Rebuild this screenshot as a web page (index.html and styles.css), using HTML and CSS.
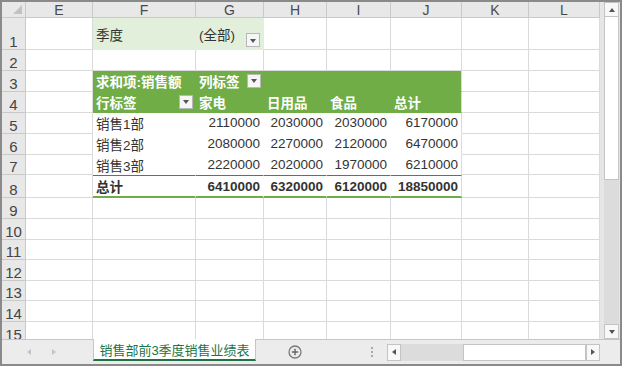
FILE: index.html
```html
<!DOCTYPE html>
<html lang="zh-CN">

<head>
    <meta charset="UTF-8">
    <title>数据透视表</title>
    <link rel="stylesheet" href="styles.css">
</head>

<body>
    <div class="window">
        <div class="main">
            <table class="sheet">
                <colgroup>
                    <col class="c-hd">
                    <col class="c-e">
                    <col class="c-f">
                    <col class="c-g">
                    <col class="c-h">
                    <col class="c-i">
                    <col class="c-j">
                    <col class="c-k">
                    <col class="c-l">
                </colgroup>
                <tr class="r-head">
                    <th class="corner"><i class="tri"></i></th>
                    <th>E</th>
                    <th>F</th>
                    <th>G</th>
                    <th>H</th>
                    <th>I</th>
                    <th>J</th>
                    <th>K</th>
                    <th>L</th>
                </tr>
                <tr class="r-tall">
                    <th>1</th>
                    <td></td>
                    <td class="flt">季度</td>
                    <td class="flt">
                        <div class="cell-dd bottom"><span>(全部)</span><i class="dd"></i></div>
                    </td>
                    <td></td>
                    <td></td>
                    <td></td>
                    <td></td>
                    <td></td>
                </tr>
                <tr>
                    <th>2</th>
                    <td></td>
                    <td></td>
                    <td></td>
                    <td></td>
                    <td></td>
                    <td></td>
                    <td></td>
                    <td></td>
                </tr>
                <tr>
                    <th>3</th>
                    <td></td>
                    <td class="pv-hd">求和项:销售额</td>
                    <td class="pv-hd">
                        <div class="cell-dd"><span>列标签</span><i class="dd"></i></div>
                    </td>
                    <td class="pv-hd"></td>
                    <td class="pv-hd"></td>
                    <td class="pv-hd last"></td>
                    <td></td>
                    <td></td>
                </tr>
                <tr>
                    <th>4</th>
                    <td></td>
                    <td class="pv-hd">
                        <div class="cell-dd"><span>行标签</span><i class="dd"></i></div>
                    </td>
                    <td class="pv-hd">家电</td>
                    <td class="pv-hd">日用品</td>
                    <td class="pv-hd">食品</td>
                    <td class="pv-hd last">总计</td>
                    <td></td>
                    <td></td>
                </tr>
                <tr>
                    <th>5</th>
                    <td></td>
                    <td class="pv">销售1部</td>
                    <td class="pv num">2110000</td>
                    <td class="pv num">2030000</td>
                    <td class="pv num">2030000</td>
                    <td class="pv num last">6170000</td>
                    <td></td>
                    <td></td>
                </tr>
                <tr>
                    <th>6</th>
                    <td></td>
                    <td class="pv">销售2部</td>
                    <td class="pv num">2080000</td>
                    <td class="pv num">2270000</td>
                    <td class="pv num">2120000</td>
                    <td class="pv num last">6470000</td>
                    <td></td>
                    <td></td>
                </tr>
                <tr>
                    <th>7</th>
                    <td></td>
                    <td class="pv">销售3部</td>
                    <td class="pv num">2220000</td>
                    <td class="pv num">2020000</td>
                    <td class="pv num">1970000</td>
                    <td class="pv num last">6210000</td>
                    <td></td>
                    <td></td>
                </tr>
                <tr>
                    <th>8</th>
                    <td></td>
                    <td class="pv total">总计</td>
                    <td class="pv total num">6410000</td>
                    <td class="pv total num">6320000</td>
                    <td class="pv total num">6120000</td>
                    <td class="pv total num last">18850000</td>
                    <td></td>
                    <td></td>
                </tr>
                <tr><th>9</th><td></td><td></td><td></td><td></td><td></td><td></td><td></td><td></td></tr>
                <tr><th>10</th><td></td><td></td><td></td><td></td><td></td><td></td><td></td><td></td></tr>
                <tr><th>11</th><td></td><td></td><td></td><td></td><td></td><td></td><td></td><td></td></tr>
                <tr><th>12</th><td></td><td></td><td></td><td></td><td></td><td></td><td></td><td></td></tr>
                <tr><th>13</th><td></td><td></td><td></td><td></td><td></td><td></td><td></td><td></td></tr>
                <tr><th>14</th><td></td><td></td><td></td><td></td><td></td><td></td><td></td><td></td></tr>
                <tr><th>15</th><td></td><td></td><td></td><td></td><td></td><td></td><td></td><td></td></tr>
            </table>

            <div class="vscroll">
                <div class="sb-btn"><i class="arr up"></i></div>
                <div class="vs-thumb"></div>
                <div class="vs-track"></div>
                <div class="sb-btn"><i class="arr down"></i></div>
            </div>
        </div>

        <div class="tabbar">
            <div class="nav">
                <i class="arr left light"></i>
                <i class="arr right light"></i>
            </div>
            <div class="tab">销售部前3季度销售业绩表</div>
            <div class="add">
                <svg width="14" height="14" viewBox="0 0 14 14">
                    <circle cx="7" cy="7" r="6" fill="none" stroke="#7a7a7a" stroke-width="1.3" />
                    <path d="M7 3.8v6.4M3.8 7h6.4" stroke="#6a6a6a" stroke-width="1.5" />
                </svg>
            </div>
            <div class="dots"><i></i><i></i><i></i></div>
            <div class="hscroll">
                <div class="sb-btn"><i class="arr left"></i></div>
                <div class="hs-track"></div>
                <div class="hs-thumb"></div>
                <div class="sb-btn"><i class="arr right"></i></div>
            </div>
        </div>
    </div>
</body>

</html>
```

FILE: styles.css
```css
* {
    box-sizing: border-box;
}

body {
    margin: 0;
    background: #fff;
    font-family: "Liberation Sans", "Noto Sans CJK SC", sans-serif;
}

.window {
    width: 622px;
    height: 366px;
    border: 2px solid #8a8a8a;
    display: flex;
    flex-direction: column;
    background: #ececec;
}

.main {
    display: flex;
    height: 337px;
}

/* sheet grid */
.sheet {
    width: 598px;
    table-layout: fixed;
    border-collapse: separate;
    border-spacing: 0;
    background: #fff;
    font-size: 13.5px;
    color: #333;
}

.c-hd { width: 24px; }
.c-e { width: 67px; }
.c-f { width: 103px; }
.c-g { width: 68px; }
.c-h { width: 63px; }
.c-i { width: 64px; }
.c-j { width: 71px; }
.c-k { width: 67px; }
.c-l { width: 71px; }

tr {
    height: 20.64px;
}

tr.r-head {
    height: 16px;
}

tr.r-tall {
    height: 32px;
}

td {
    border-right: 1px solid #dadada;
    border-bottom: 1px solid #dadada;
    padding: 0 3px;
    white-space: nowrap;
    overflow: hidden;
    vertical-align: middle;
}

th {
    background: #e8e8e8;
    border-right: 1px solid #c9c9c9;
    border-bottom: 1px solid #c9c9c9;
    font-weight: normal;
    color: #444;
    padding: 0;
    font-size: 15px;
    line-height: 1;
    vertical-align: bottom;
}

.r-head th {
    font-size: 14px;
    vertical-align: middle;
    color: #4a4a4a;
}

.corner {
    position: relative;
}

.corner .tri {
    position: absolute;
    right: 3px;
    bottom: 3px;
    border-left: 9px solid transparent;
    border-bottom: 9px solid #c2c2c2;
}

/* report filter */
.flt {
    background: #e2efda;
    border-color: #e2efda;
}

.cell-dd {
    display: flex;
    justify-content: space-between;
    align-items: center;
}

.cell-dd.bottom {
    align-items: flex-end;
    height: 27px;
    padding-bottom: 0;
}

.cell-dd.bottom span {
    align-self: center;
}

.dd {
    width: 14px;
    height: 14px;
    flex: none;
    background: #f6f6f6;
    border: 1px solid #b8b8b8;
    display: flex;
    align-items: center;
    justify-content: center;
}

.dd::after {
    content: "";
    border-left: 3.5px solid transparent;
    border-right: 3.5px solid transparent;
    border-top: 4px solid #555;
    margin-top: 1px;
}

.pv-hd .dd {
    margin-right: -1px;
}

/* pivot table */
.pv-hd {
    background: #70ad47;
    border-color: #70ad47;
    color: #fff;
    font-weight: bold;
}

.pv {
    border-right-color: #fff;
    border-bottom-color: #fff;
}

.last {
    border-right-color: #dadada;
}

.num {
    text-align: right;
}

.total {
    font-weight: bold;
    border-top: 1px solid #548235;
    border-bottom: 2px solid #70ad47;
}

tr:nth-child(8) .pv {
    border-bottom: 0;
}

/* scrollbars */
.vscroll {
    width: 20px;
    padding: 0 1px 0 4px;
    display: flex;
    flex-direction: column;
    background: #e6e6e6;
}

.sb-btn {
    width: 15px;
    height: 15px;
    flex: none;
    background: #f8f8f8;
    border: 1px solid #c4c4c4;
    display: flex;
    align-items: center;
    justify-content: center;
}

.vs-thumb {
    height: 163px;
    background: #fff;
    border: 1px solid #c4c4c4;
    border-top: 0;
}

.vs-track {
    flex: 1;
    background: #dcdcdc;
}

.arr {
    display: block;
    width: 0;
    height: 0;
}

.arr.up {
    border-left: 3.5px solid transparent;
    border-right: 3.5px solid transparent;
    border-bottom: 4px solid #555;
}

.arr.down {
    border-left: 3.5px solid transparent;
    border-right: 3.5px solid transparent;
    border-top: 4px solid #555;
}

.arr.left {
    border-top: 3.5px solid transparent;
    border-bottom: 3.5px solid transparent;
    border-right: 4px solid #555;
}

.arr.right {
    border-top: 3.5px solid transparent;
    border-bottom: 3.5px solid transparent;
    border-left: 4px solid #555;
}

.arr.light {
    border-left-color: transparent;
    border-right-color: transparent;
}

.arr.left.light {
    border-right-color: #c4c4c4;
}

.arr.right.light {
    border-left-color: #c4c4c4;
}

/* sheet tabs */
.tabbar {
    flex: 1;
    display: flex;
    align-items: center;
    border-top: 1px solid #c6c6c6;
    background: #ececec;
}

.nav {
    width: 91px;
    display: flex;
    gap: 21px;
    padding-left: 25px;
}

.tab {
    align-self: stretch;
    width: 163px;
    margin-top: -1px;
    margin-bottom: 3px;
    background: #fff;
    border-left: 1px solid #c6c6c6;
    border-right: 1px solid #c6c6c6;
    border-bottom: 2px solid #217346;
    color: #217346;
    font-size: 13px;
    display: flex;
    align-items: center;
    justify-content: center;
}

.add {
    margin-left: 32px;
    display: flex;
}

.dots {
    margin-left: 69px;
    display: flex;
    flex-direction: column;
    gap: 2px;
}

.dots i {
    width: 2px;
    height: 2px;
    background: #a8a8a8;
}

.hscroll {
    margin-left: 14px;
    width: 213px;
    height: 17px;
    display: flex;
}

.hscroll .sb-btn {
    width: 14px;
    height: 17px;
}

.hs-track {
    width: 62px;
    background: #dcdcdc;
}

.hs-thumb {
    flex: 1;
    background: #fff;
    border: 1px solid #c4c4c4;
}
```
